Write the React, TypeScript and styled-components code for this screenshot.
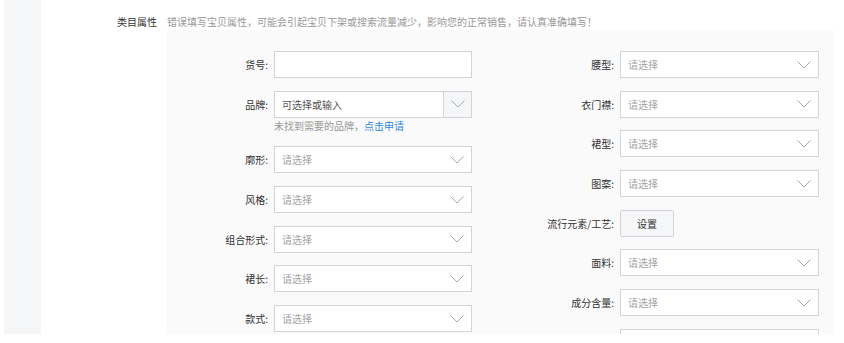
import React from 'react';
import styled, { createGlobalStyle } from 'styled-components';

const GlobalStyle = createGlobalStyle`
  body {
    margin: 0;
    background: #fff;
    font-family: "Noto Sans CJK SC", "Noto Sans", sans-serif;
    font-size: 10px;
    color: #333;
  }
`;

const leftFields = [
  { label: '货号', kind: 'text' },
  { label: '品牌', kind: 'combo', hint: true },
  { label: '廓形', kind: 'select' },
  { label: '风格', kind: 'select' },
  { label: '组合形式', kind: 'select' },
  { label: '裙长', kind: 'select' },
  { label: '款式', kind: 'select' },
];

const rightFields = [
  { label: '腰型', kind: 'select' },
  { label: '衣门襟', kind: 'select' },
  { label: '裙型', kind: 'select' },
  { label: '图案', kind: 'select' },
  { label: '流行元素/工艺', kind: 'button' },
  { label: '面料', kind: 'select' },
  { label: '成分含量', kind: 'select' },
  { label: '', kind: 'empty' },
];

const Chevron = () => (
  <svg width="14" height="8" viewBox="0 0 14 8">
    <polyline points="0.5,0.5 7,7 13.5,0.5" fill="none" stroke="#a8a8b0" strokeWidth="1" />
  </svg>
);

const renderControl = (kind) => {
  if (kind === 'text' || kind === 'empty') return <TextBox />;
  if (kind === 'button') return <SetButton>设置</SetButton>;
  if (kind === 'combo') {
    return (
      <Combo>
        <ComboText>可选择或输入</ComboText>
        <ComboArrow><Chevron /></ComboArrow>
      </Combo>
    );
  }
  return (
    <Select>
      <Placeholder>请选择</Placeholder>
      <Chevron />
    </Select>
  );
};

const FieldColumn = ({ fields, labelWidth, inputWidth }) => (
  <Column>
    {fields.map((f, i) => (
      <Field key={i}>
        <Row>
          <Label $width={labelWidth}>{f.label ? `${f.label}:` : ''}</Label>
          <Control $width={inputWidth}>{renderControl(f.kind)}</Control>
        </Row>
        {f.hint && (
          <Hint $offset={labelWidth}>
            未找到需要的品牌，<Link>点击申请</Link>
          </Hint>
        )}
      </Field>
    ))}
  </Column>
);

export default function App() {
  return (
    <>
      <GlobalStyle />
      <Page>
        <SideStrip />
        <Main>
          <Section>
            <SectionLabel>类目属性</SectionLabel>
            <SectionBody>
              <Notice>错误填写宝贝属性，可能会引起宝贝下架或搜索流量减少，影响您的正常销售，请认真准确填写！</Notice>
              <Panel>
                <FieldColumn fields={leftFields} labelWidth={101} inputWidth={198} />
                <FieldColumn fields={rightFields} labelWidth={100} inputWidth={199} />
              </Panel>
            </SectionBody>
          </Section>
        </Main>
      </Page>
    </>
  );
}

const Page = styled.div`
  display: flex;
  height: 334px;
  overflow: hidden;
  padding-left: 4px;
`;

const SideStrip = styled.div`
  width: 37px;
  flex-shrink: 0;
  background-color: #f5f6f8;
`;

const Main = styled.div`
  flex: 1;
  padding: 14px 10px 0 0;
`;

const Section = styled.div`
  display: grid;
  grid-template-columns: 116px 1fr;
  column-gap: 10px;
`;

const SectionLabel = styled.div`
  text-align: right;
  line-height: 16px;
  color: #333;
`;

const SectionBody = styled.div`
  display: flex;
  flex-direction: column;
`;

const Notice = styled.div`
  line-height: 16px;
  color: #999;
  white-space: nowrap;
`;

const Panel = styled.div`
  display: flex;
  gap: 42px;
  background-color: #fafafa;
  padding-top: 21px;
  min-height: 400px;
`;

const Column = styled.div`
  display: flex;
  flex-direction: column;
  gap: 12.7px;
`;

const Field = styled.div`
  display: flex;
  flex-direction: column;
`;

const Row = styled.div`
  display: flex;
  align-items: center;
  gap: 6px;
`;

const Label = styled.div`
  width: ${(p) => p.$width}px;
  text-align: right;
  color: #333;
  white-space: nowrap;
`;

const Control = styled.div`
  width: ${(p) => p.$width}px;
`;

const TextBox = styled.div`
  box-sizing: border-box;
  height: 27px;
  border: 1px solid #d3d3da;
  background: #fff;
`;

const Select = styled.div`
  box-sizing: border-box;
  height: 27px;
  border: 1px solid #d3d3da;
  background: #fff;
  display: flex;
  align-items: center;
  justify-content: space-between;
  padding: 0 7px;
`;

const Placeholder = styled.span`
  color: #a3a3a3;
`;

const Combo = styled.div`
  box-sizing: border-box;
  height: 27px;
  border: 1px solid #d3d3da;
  background: #fff;
  display: flex;
`;

const ComboText = styled.span`
  flex: 1;
  display: flex;
  align-items: center;
  padding-left: 7px;
  color: #555;
`;

const ComboArrow = styled.span`
  width: 27px;
  border-left: 1px solid #d3d3da;
  background-color: #f5f6f8;
  display: flex;
  align-items: center;
  justify-content: center;
`;

const SetButton = styled.button`
  box-sizing: border-box;
  width: 54px;
  height: 27px;
  border: 1px solid #d3d3da;
  border-radius: 2px;
  background-color: #f5f6f8;
  color: #333;
  font-family: inherit;
  font-size: 10px;
  padding: 0;
`;

const Hint = styled.div`
  margin-left: ${(p) => p.$offset + 6}px;
  line-height: 16px;
  color: #999;
`;

const Link = styled.span`
  color: #3089dc;
`;
